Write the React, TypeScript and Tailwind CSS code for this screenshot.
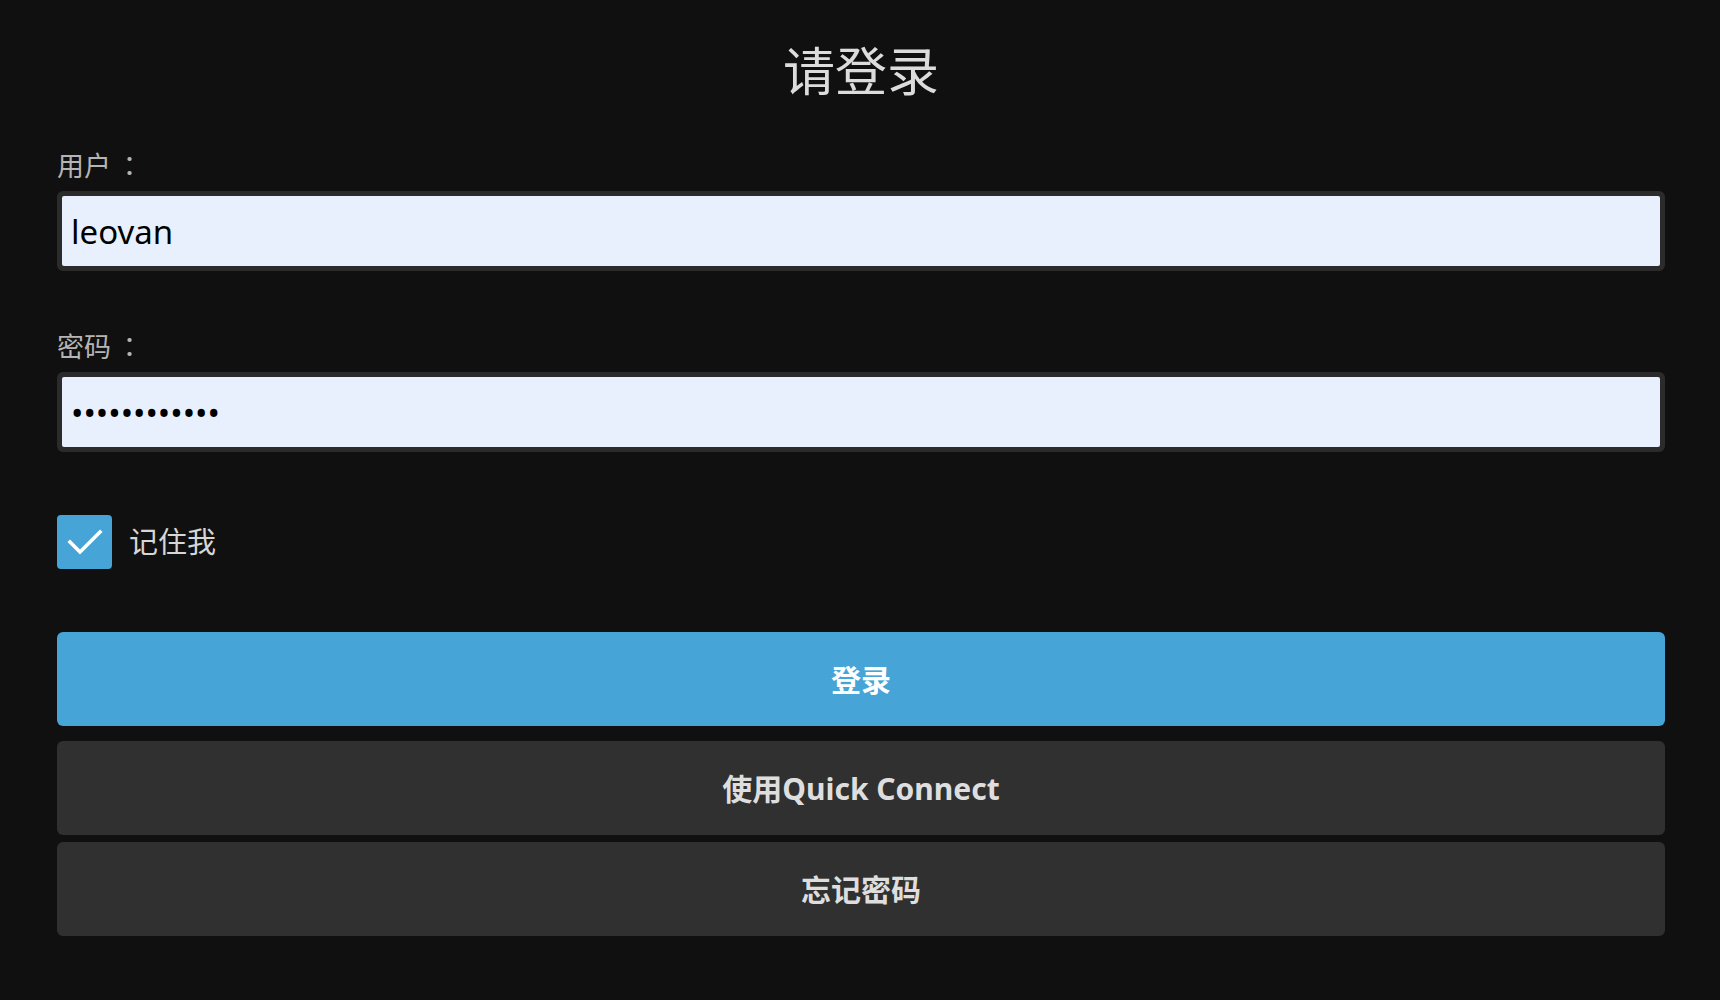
import React from "react";

const font = { fontFamily: '"Noto Sans", "Noto Sans CJK SC", sans-serif' };
const jp = { fontFamily: '"Noto Sans CJK JP", sans-serif' };

function Field({ label, type, value, mt }: { label: string; type: string; value: string; mt: string }) {
  return (
    <div className={mt}>
      <div className="h-[32px] text-[27px] leading-[32px] text-[#b5b5b5]">
        {label}
        <span className="ml-[5px]" style={jp}>：</span>
      </div>
      <div className="mt-[10px] h-[80px] rounded-[6px] border-[5px] border-[#2b2b2b] bg-[#2b2b2b]">
        <input
          readOnly
          type={type}
          value={value}
          className="block h-full w-full rounded-[2px] bg-[#e8f0fe] px-[9px] text-[33px] text-black outline-none"
          style={font}
        />
      </div>
    </div>
  );
}

export default function App() {
  return (
    <div className="min-h-[1000px] w-full bg-[#101010] pl-[57px] pr-[55px]" style={font}>
      <h1 className="pt-[40px] text-center text-[52px] font-normal leading-[62px] text-[#dcdcdc]">请登录</h1>
      <Field label="用户" type="text" value="leovan" mt="mt-[47px]" />
      <Field label="密码" type="password" value="123456789012" mt="mt-[59px]" />
      <div className="mt-[63px] flex items-center">
        <div className="flex h-[54px] w-[55px] items-center justify-center rounded-[4px] bg-[#46a4d7]">
          <svg width="36" height="30" viewBox="0 0 36 30" fill="none">
            <path d="M3 15 L13 25 L33 5" stroke="white" strokeWidth="3.6" strokeLinecap="square" />
          </svg>
        </div>
        <span className="ml-[17px] text-[29px] leading-[34px] text-[#d6d6d6]">记住我</span>
      </div>
      <div className="mt-[63px] flex flex-col">
        <button className="flex h-[94px] items-center justify-center rounded-[6px] bg-[#46a4d7] text-[30px] font-bold text-white">
          登录
        </button>
        <button className="mt-[15px] flex h-[94px] items-center justify-center rounded-[6px] bg-[#303030] text-[30px] font-bold text-[#dedede]">
          使用Quick Connect
        </button>
        <button className="mt-[7px] flex h-[94px] items-center justify-center rounded-[6px] bg-[#303030] text-[30px] font-bold text-[#dedede]">
          忘记密码
        </button>
      </div>
    </div>
  );
}
